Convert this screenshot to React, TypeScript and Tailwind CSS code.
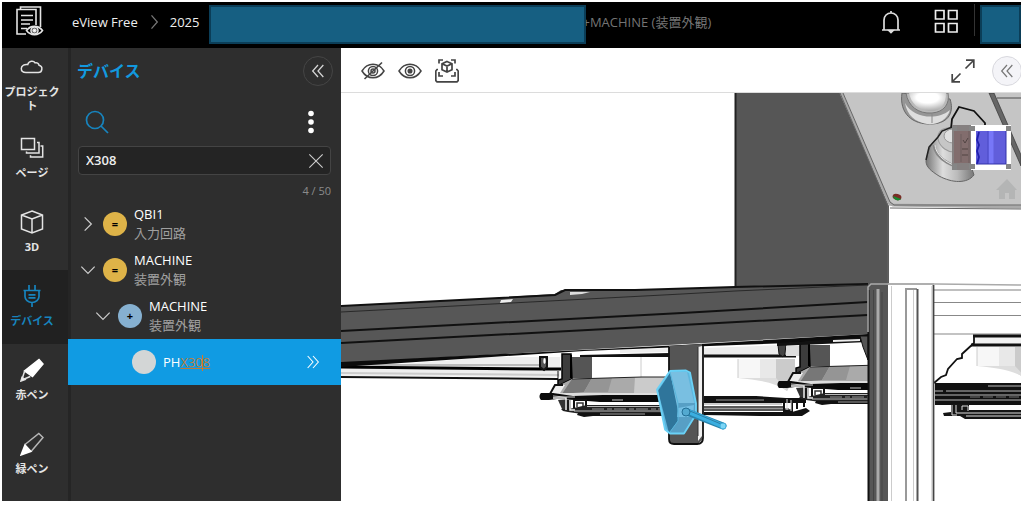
/**
 * Device search view
 * Header, navigation rail, device tree and the 3D machine viewer
 */

import { useState } from 'react';
import type { ReactNode } from 'react';
import { clsx } from 'clsx';

interface IconProps {
  children: ReactNode;
  className?: string;
  strokeWidth?: number;
}

function Icon({ children, className = 'size-6', strokeWidth = 1.5 }: IconProps) {
  return (
    <svg
      viewBox="0 0 24 24"
      fill="none"
      stroke="currentColor"
      strokeWidth={strokeWidth}
      className={clsx('shrink-0', className)}
      aria-hidden="true"
    >
      {children}
    </svg>
  );
}

const navItems = [
  {
    id: 'project',
    label: 'プロジェクト',
    icon: <path d="M6 17.5h12a3.7 3.7 0 0 0 1-7.3c-.3-2-2.200-2.900-3.900-2.300C13.800 5.700 9 5.400 7.700 9.600 5 9 1.300 10.300 1.300 13.500c0 2.400 2 4 4.700 4z" />,
  },
  {
    id: 'pages',
    label: 'ページ',
    icon: (
      <>
        <rect x="1.500" y="2.500" width="13" height="11" />
        <path d="M17 6.500h2v10.500H6.500v-1.500M20.500 10h2.200v11H10.500v-1.800" />
      </>
    ),
  },
  {
    id: '3d',
    label: '3D',
    icon: <path d="M12 1 22.500 5v14L12 23 1.500 19V5zM1.500 5 12 9l10.500-4M12 9v14" />,
  },
  {
    id: 'devices',
    label: 'デバイス',
    icon: (
      <path
        strokeWidth="1.700"
        d="M9 1v5M15 1v5M3.500 6.500h17M5 7v5.500c0 3 3 6 7 6s7-3 7-6V7M12 18.500V23M8.500 10.800h7M8.500 13.800h7"
      />
    ),
  },
  {
    id: 'red',
    label: '赤ペン',
    icon: (
      <>
        <path d="M19 1.500 23 6 12.500 18.500 4.500 13z" fill="#fff" stroke="#fff" />
        <path d="M4.500 13.500 1.800 22l8.500-3.500" />
        <path d="m1 23 1-3.500 3 2z" fill="#fff" />
      </>
    ),
  },
  {
    id: 'green',
    label: '緑ペン',
    icon: (
      <>
        <path d="M5 12.500 18.800 1.500 23 5.500 11.500 19" opacity=".75" />
        <path d="m5 13 6 6.500L1 23z" fill="#fff" stroke="#fff" />
      </>
    ),
  },
];

interface DeviceRow {
  id: number;
  title: string;
  subtitle: string;
  sign: string;
  open: boolean;
  nested: boolean;
}

const rows: DeviceRow[] = [
  { id: 1, title: 'QBI1', subtitle: '入力回路', sign: '=', open: false, nested: false },
  { id: 2, title: 'MACHINE', subtitle: '装置外観', sign: '=', open: true, nested: false },
  { id: 3, title: 'MACHINE', subtitle: '装置外観', sign: '+', open: true, nested: true },
];

function Header() {
  return (
    <header className="flex h-[46px] shrink-0 items-start bg-black text-[13px] text-[#eee]">
      <a href="#home" aria-label="Home" className="ml-3 mt-1">
        <svg viewBox="0 0 30 32" className="h-8 w-[30px]" fill="none" stroke="#e5e5e5" strokeWidth="1.600">
          <path d="M6.500 3.500V1h20v20M12 28H3V3.500h19V19M7 9.500h12M7 14h12M7 18h9M7 22.500h6" />
          <path d="M12.500 24.500c4-5.500 12-5.500 16 0-4 5.500-12 5.500-16 0z" />
          <circle cx="20.500" cy="24.500" r="3.500" />
          <circle cx="20.500" cy="24.500" r="1.500" fill="#fff" />
        </svg>
      </a>
      <nav aria-label="Breadcrumb" className="flex min-w-0 flex-1 items-start">
        <a href="#free" className="ml-7 mt-2.5 shrink-0 whitespace-nowrap leading-5">eView Free</a>
        <Icon className="mx-1.5 mt-2.5 size-5 text-[#777]">
          <path d="m9 4 7 8-7 8" />
        </Icon>
        <a href="#2025" className="mt-2.5 leading-5">2025</a>
        <div className="relative z-10 ml-2.5 mt-[3px] h-[39px] w-[377px] border-2 border-[#0b3e58] bg-[#165f82]" />
        <span className="-ml-1 mt-2.5 whitespace-nowrap leading-5 text-[#747474]">+MACHINE (装置外観)</span>
      </nav>
      <button aria-label="Notifications" className="mt-2 mr-[31px]">
        <Icon strokeWidth={1.700} className="size-6 text-[#ddd]">
          <path d="M3 20h18M5 19.500V10c0-4 3-7 7-7s7 3 7 7v9.500M12 1v2" />
          <path d="M10 20.500h4l-2 2z" fill="currentColor" />
        </Icon>
      </button>
      <button aria-label="Apps" className="mt-[7px] mr-4">
        <Icon strokeWidth={1.700}>
          <path d="M1.500 1.500H10V10H1.500zM14.500 1.500H23V10h-8.500zM1.500 14.500H10V23H1.500zM14.500 14.500H23V23h-8.500z" />
        </Icon>
      </button>
      <div className="mt-0.5 h-8 w-px bg-[#333]" />
      <div className="ml-[5px] mt-[3px] h-[39px] w-[41px] border-2 border-[#0b3e58] bg-[#165f82]" />
    </header>
  );
}

function NavRail() {
  return (
    <nav aria-label="Views" className="w-[66px] shrink-0 bg-[#2e2e2e]">
      {navItems.map((item) => (
        <button
          key={item.id}
          className={clsx(
            'flex h-[74px] w-full flex-col items-center justify-center gap-1.5 pb-0.5 pr-1.5 text-[11px] font-bold leading-[14px]',
            item.id === 'devices' ? 'bg-[#212121] text-[#1784be]' : 'text-[#e4e4e4]'
          )}
        >
          <Icon>{item.icon}</Icon>
          <span className="w-full break-all">{item.label}</span>
        </button>
      ))}
    </nav>
  );
}

function DevicePanel() {
  const [query, setQuery] = useState('X308');

  return (
    <aside className="w-[273px] shrink-0 border-l-[3px] border-[#252525] bg-[#2e2e2e]">
      <div className="flex h-[46px] items-center justify-between pl-1.5 pr-2">
        <h1 className="text-base font-bold text-[#1299df]">デバイス</h1>
        <button
          aria-label="Collapse panel"
          className="grid size-[30px] place-items-center rounded-full border border-[#454545] text-[#d5d5d5]"
        >
          <Icon className="size-4" strokeWidth={1.900}>
            <path d="m12 3-8 9 8 9M20 3l-8 9 8 9" />
          </Icon>
        </button>
      </div>
      <div className="mt-3.5 flex h-7 items-center justify-between pl-3.5 pr-4">
        <button aria-label="Search" className="text-[#1784be]">
          <Icon strokeWidth={1.700}>
            <circle cx="10" cy="10" r="8.500" />
            <path d="m16 16 7 7" />
          </Icon>
        </button>
        <button aria-label="More options" className="mr-0.5 text-white">
          <Icon className="size-6">
            <g fill="currentColor" stroke="none">
              <circle cx="12" cy="3.500" r="2.800" />
              <circle cx="12" cy="12" r="2.800" />
              <circle cx="12" cy="20.500" r="2.800" />
            </g>
          </Icon>
        </button>
      </div>
      <div className="ml-[7px] mr-2.5 mt-2.5 flex h-[29px] items-center rounded-sm border border-[#444] bg-[#242424]">
        <input
          aria-label="Search devices"
          value={query}
          onChange={(e) => setQuery(e.target.value)}
          className="min-w-0 flex-1 bg-transparent px-[7px] text-[13px] font-semibold text-[#eee] outline-none"
        />
        <button aria-label="Clear search" onClick={() => setQuery('')} className="mr-1.5 text-[#ccc]">
          <Icon className="size-4" strokeWidth={1.700}>
            <path d="m2 2 20 20M22 2 2 22" />
          </Icon>
        </button>
      </div>
      <p className="mt-2 mr-2.5 mb-0.5 text-right text-[11px] leading-4 text-[#8b8b8b]">4 / 50</p>

      <ul>
        {rows.map((row) => (
          <li key={row.id}>
            <button
              aria-expanded={row.open}
              className={clsx('flex h-[46px] w-full items-center text-left', row.nested ? 'pl-6' : 'pl-[9px]')}
            >
              <Icon className="size-4 text-[#ccc]" strokeWidth={1.900}>
                {row.open ? <path d="m2 7 10 10L22 7" /> : <path d="m7 2 10 10L7 22" />}
              </Icon>
              <span
                className={clsx(
                  'ml-[7px] grid size-6 shrink-0 place-items-center rounded-full text-[11px] font-bold leading-4 text-black',
                  row.nested ? 'bg-[#86b0d0]' : 'bg-[#deb348]'
                )}
              >
                {row.sign}
              </span>
              <span className="ml-[7px] flex flex-col text-[13px] leading-[19px]">
                <span className="font-medium text-white">{row.title}</span>
                <span className="text-[#a0a0a0]">{row.subtitle}</span>
              </span>
            </button>
          </li>
        ))}
        <li className="-ml-[3px] bg-[#109be3]">
          <button className="flex h-[46px] w-full items-center pl-16 text-[13px] leading-[19px] text-white">
            <span className="size-6 rounded-full bg-[#d3d6d6]" />
            <span className="relative ml-[7px] font-medium">
              PH<span className="text-[#b87f41] underline decoration-[#c07a34]">X308</span>
              <span className="absolute right-[7px] top-0.5 h-4 w-px bg-[#e2761b]" />
            </span>
            <Icon className="ml-auto mr-5 size-4" strokeWidth={1.600}>
              <path d="m4 3 8 9-8 9M12 3l8 9-8 9" />
            </Icon>
          </button>
        </li>
      </ul>
    </aside>
  );
}

function Toolbar() {
  const eye = (
    <>
      <path d="M1 12c5.500-9 16.500-9 22 0-5.500 9-16.500 9-22 0z" />
      <circle cx="12" cy="12" r="4.600" />
    </>
  );

  return (
    <div className="relative flex h-[45px] shrink-0 items-center gap-[13px] border-b border-[#dcdcdc] bg-white pl-5 pt-px text-[#444]">
      <button aria-label="Hide">
        <Icon>
          {eye}
          <circle cx="12" cy="12" r="2" />
          <path d="M3.500 20 21 3.500" strokeWidth="1.600" />
        </Icon>
      </button>
      <button aria-label="Show">
        <Icon>
          {eye}
          <circle cx="12" cy="12" r="1.800" fill="currentColor" />
        </Icon>
      </button>
      <button aria-label="Fit selection">
        <Icon strokeWidth={1.700}>
          <path d="M4 4.500V1h4M16 1h4v3.500M4 13v4h4M16 17h4v-4" />
          <path d="m12 2.500 5 2.200v6L12 13l-5-2.300v-6zM7 4.700l5 2.300 5-2.300M12 7v6" />
          <path d="M3 10.500H2L.8 12v9.500l1.200 1.300h20l1.200-1.300V12L22 10.500h-1" />
        </Icon>
      </button>
      <button aria-label="Full screen" className="ml-auto mr-1">
        <Icon strokeWidth={1.700}>
          <path d="m14.500 9.500 8-8M15 1.200h7.800V9M9.500 14.500l-8 8M1.200 15v7.800H9" />
        </Icon>
      </button>
      <button
        aria-label="Open side panel"
        className="-mr-px grid size-[30px] place-items-center rounded-full border border-[#d8d8de] bg-[#f4f4f8] text-[#777]"
      >
        <Icon className="size-4" strokeWidth={1.800}>
          <path d="m12 3-8 9 8 9M20 3l-8 9 8 9" />
        </Icon>
      </button>
    </div>
  );
}

/** Round tray with its support arm, repeated along the machine */
function Tray({ x = 0, y = 0 }: { x?: number; y?: number }) {
  return (
    <g transform={`translate(${x} ${y})`}>
      <path d="M572 357h20v21h-20z" fill="#555" />
      <path d="M562 354h9l1 25-14 7v-6l4-1z" fill="#3c3c3c" stroke="#000" strokeWidth="1.500" />
      <path d="M571 355v23" stroke="#000" strokeWidth="2" />
      <path d="m572 379 70-2h34v18H555l3-9z" fill="#aaa" />
      <path d="m572 379 20-1-8 14-22 2z" fill="#777" />
      <path d="M592 378h20l-4 14h-24z" fill="#959595" />
      <path d="m635 377 7 0h34v16h-42z" fill="#cbcbcb" />
      <path d="M572 379l70-2h34" stroke="#222" />
      <path d="M555 393h112v3H553z" fill="#ddd" />
      <path d="m555 384 10 1-5 8-10 2z" fill="#eee" />
      <path d="M543 396l7-2 5-9h8" stroke="#111" strokeWidth="2" />
      <path d="M541 393h12l20 3 30-1h135v7H600l-25-2-18-1-8 1h-8c-2-2-2-5 0-7z" fill="#0a0a0a" />
      <path d="M612 400h11M553 396l12 1h10" stroke="#ccc" />
      <path d="M558 400h13v9h-9z" fill="#333" />
      <path d="M574 408v-8h12v8" stroke="#111" strokeWidth="2" />
      <path d="M577 407v-4h6v4" stroke="#333" strokeWidth="1.500" />
      <path d="M561 409h8l18-4h151v9H582l-14-2-5-1z" fill="#222" />
      <path d="M553 398h13v12M570 400v10h5" stroke="#eee" strokeWidth="1.500" />
      <path d="M568 400v10" stroke="#111" strokeWidth="1.500" />
      <path d="M587 406.500h150M574 411h164" stroke="#bbb" />
      <path d="M592 409h145" stroke="#999" strokeDasharray="12 3 5 2" />
      <path d="M578 413h160l-3 3H593l-9 1-7-2z" fill="#111" />
      <path d="M600 414h45" stroke="#ddd" strokeWidth=".7" />
    </g>
  );
}

function ConeFade({ x, y }: { x: number; y: number }) {
  return (
    <g transform={`translate(${x} ${y})`}>
      <path d="M0 0h22v20L0 19z" fill="#f7f7f7" />
      <path d="M22 0h16v25l-16-5z" fill="#e8e8e8" />
      <path d="M38 0h19v18l-8 14-11-7z" fill="#cbcbcb" />
      <path d="M0 19h38l12 13c-14-9-30-11-50-13z" fill="#ddd" />
      <path d="M0 0v19" stroke="#ccc" />
    </g>
  );
}

function PushLamp() {
  return (
    <g>
      <path d="M902 93c-3 20 10 32 30 31 18-1 22-13 18-25z" fill="#969696" stroke="#666" />
      <path d="M905 103c8 15 32 18 45 7-3 10-12 15-23 14-12-2-20-9-22-21z" fill="#dedede" />
      <path d="M906 93c2 13 12 21 26 20 12-1 18-9 16-20z" fill="#b9b9b9" stroke="#777" />
      <path d="M909 93c2 10 9 17 20 18 12 1 17-7 17-18z" fill="url(#lamp)" />
      <path d="M932 114v9" stroke="#888" />
      <path d="m951 129 1-10 7-12 15 4 11 12v6" stroke="#111" strokeWidth="1.800" />
    </g>
  );
}

function SelectorSwitch() {
  return (
    <g>
      <path d="M926 161c2-9 4-18 11-22l10-9 12-1 15 46c-7 9-22 8-35 1-8-5-13-9-13-15z" fill="url(#steel)" stroke="#666" />
      <path d="M934 145c1 13 21 27 40 20" fill="none" stroke="#888" strokeWidth="3" />
      <path d="M935 145c1 13 21 27 40 20" stroke="#eee" />
      <ellipse cx="951" cy="140" rx="14" ry="11" transform="rotate(35 951 140)" fill="#c6c6c6" stroke="#999" />
      <ellipse cx="953" cy="136" rx="9" ry="7" fill="#e0e0e0" stroke="#999" />
      <path d="m926 160 3-13 9-10 4-6 10-4" stroke="#222" strokeWidth="1.500" />
      <path d="M952 125h19v45h-19z" fill="#858080" />
      <path d="M954 131h16v32h-16z" fill="#826d6d" />
      <path d="M961 134v28M969 131v32" stroke="#6d5e5e" />
      <path d="M963 140l2 3 3-5M962 149h6M962 155h6" stroke="#514443" />
      <path d="M971 125h40v45h-40z" fill="#fff" />
      <path d="M976 131h30v33h-30z" fill="#615edb" />
      <path d="M991 131v33" stroke="#7777f8" strokeWidth="5" />
      <path d="M988 131v33" stroke="#4b48c4" />
      <path d="m979 132-2 8 2 5-2 6 2 6-2 7" stroke="#2020ad" strokeWidth="1.800" />
      <path d="M976 164h30v-33" stroke="#3333a8" />
      <path d="M952 126h5v5h-5zM969 126h6v5h-6zM1006 126h5v5h-5zM952 164h5v6h-5zM969 164h6v5h-6zM1006 164h5v5h-5z" fill="#858585" />
    </g>
  );
}

function MachineScene() {
  return (
    <svg
      viewBox="341 93 680 408"
      preserveAspectRatio="xMidYMid slice"
      className="absolute inset-0 size-full"
      fill="none"
      role="img"
      aria-label="3D machine model"
    >
      <defs>
        <radialGradient id="lamp" cx=".5" cy=".25" r=".75">
          <stop offset=".4" stopColor="#fff" />
          <stop offset="1" stopColor="#aaa" />
        </radialGradient>
        <linearGradient id="steel">
          <stop stopColor="#777" />
          <stop offset=".35" stopColor="#ddd" />
          <stop offset=".65" stopColor="#bbb" />
          <stop offset="1" stopColor="#777" />
        </linearGradient>
        <clipPath id="middle">
          <path d="M740 330h128v100H740z" />
        </clipPath>
        <clipPath id="near">
          <path d="M530 345h140v80H530z" />
        </clipPath>
      </defs>

      {/* Control cabinet */}
      <path d="M735 93h106l48 113v90H735z" fill="#565656" />
      <path d="M735.500 93v195" stroke="#222" strokeWidth="2" />
      <path d="M841 93h180v115l-132-2z" fill="#c5c5c5" />
      <path d="m841 93 48 110 4 2 128 2" stroke="#aaa" strokeWidth="3" />
      <path d="m840 93 48 113v84M843 93l47 109 4 3h127M890 208l131 1" stroke="#666" />
      <path d="m989 93 5 0 27 62v11z" fill="#666" stroke="#333" strokeWidth=".7" />
      <path d="M997 98h24" stroke="#888" strokeWidth="2" />
      <PushLamp />
      <SelectorSwitch />
      <ellipse cx="897" cy="197" rx="4.500" ry="3" transform="rotate(15 897 197)" fill="#7a2c25" />
      <path d="m893 196 8 3c-3 3-7 1-8-3z" fill="#168a30" />
      <path d="m996 190 11-11 10 11h-2v9h-6v-6h-4v6h-6v-9z" fill="#b4b5b5" />

      {/* Rails under the beam */}
      <path d="M341 369 490 357h70v20l-219-1z" fill="#eee" />
      <path d="m341 367 200 2h20" stroke="#000" strokeWidth="3" />
      <path d="M350 365h190" stroke="#bbb" strokeWidth="2" />
      <path d="m341 373 218 2" stroke="#ccc" strokeWidth="2" />
      <path d="m341 377 217 2" stroke="#111" strokeWidth="2" />
      <path d="M558 371v8" stroke="#111" />
      <path d="M540 357h7v10l-3 3-4-3z" fill="#555" stroke="#111" strokeWidth="2" />
      <ellipse cx="544.500" cy="361" rx="1.200" ry="3" fill="#fff" />
      <path d="M641 357v20" stroke="#ccc" />
      <g clipPath="url(#near)">
        <Tray />
      </g>
      <path d="m580 355 90-2v4h-90z" fill="#111" />
      <path d="m620 350 50-2v4l-50 1z" fill="#eee" />

      {/* Main beam */}
      <path d="m341 306 158-8 6-1 50-3 6-4h80l94-3 133-3v50L341 363z" fill="#575757" />
      <path d="m341 306 158-8 56-3 10-5h70l100-3 133-3" stroke="#111" strokeWidth="2" />
      <path d="m341 312 341-18 53-3 133-6" stroke="#292929" />
      <path d="m341 331 341-18 186-11M341 343l341-18 186-10" stroke="#111" strokeWidth="2" />
      <path d="m341 362 341-17 186-11v6l-186 7-98 4-243 16z" fill="#0b0b0b" />
      <path d="m501 300 12-1-2 3-11 1z" fill="#eee" />
      <path d="m570 292 20 0-8 2-12 1z" fill="#ddd" />

      {/* Right part of the lower deck */}
      <path d="m704 348 76-3v10h-76z" fill="#ececec" />
      <path d="M704 356h92" stroke="#111" strokeWidth="3" />
      <ConeFade x={738} y={359} />
      <path d="m778 345 8-1-1 10-2 3-4-3z" fill="#444" stroke="#111" />
      <path d="M786 346h14v10h-14z" fill="#ddd" />
      <path d="M704 396h92l8 4 4 8-9 8H704z" fill="#fff" />
      <path d="M704 396h52l30 2h20v5H704z" fill="#111" />
      <path d="M716 400h48" stroke="#999" />
      <path d="M704 407h80M704 410h88" stroke="#222" strokeWidth="1.500" />
      <path d="M704 408.500h85M704 404h78" stroke="#999" />
      <path d="M704 412h88l14-4 4 3-8 5H760l-56-1z" fill="#111" />
      <path d="M784 399v12h8v-12M797 409v-7h7v5" stroke="#111" strokeWidth="2" />
      <path d="M787 399v11M791 400v11" stroke="#ddd" />
      <g clipPath="url(#middle)">
        <Tray x={238} y={-12} />
      </g>
      <path d="m777 343 91-6v5l-91 4z" fill="#111" />
      <path d="m833 340 27-1v2l-27 1z" fill="#eee" />
      <path d="M860 336h8v24l-5-13z" fill="#555" stroke="#111" />

      {/* Sensor bracket */}
      <path d="m669 346 33-2v96l-5 5h-22l-6-4z" fill="#555" />
      <path d="m698 347 4-1v90l-4 5z" fill="#f1f1f1" />
      <path d="M669 347v92c0 3 2 5 5 5h23c4 0 6-2 6-6v-92" stroke="#111" strokeWidth="1.800" />
      <path d="M698 347v89" stroke="#333" />

      {/* Highlighted sensor */}
      <path d="m670 371 16-.5 4 2 6 31v11l-12 19h-14l-5-4-7-35-1-5z" fill="#5eb6dd" />
      <path d="m658 391 12-18 8 30v18l-9 12z" fill="#2f759b" />
      <path d="m670 372 17 0 8 34-17 5z" fill="#79bfe1" />
      <path d="m678 403 0 18-9 12h15l11-18v-12z" fill="#579fc5" />
      <path d="m678 408 16-3-1 12-16 0z" fill="#73bee3" />
      <path d="M670 372l8 31v18l-8 11" stroke="#58b4da" />
      <path d="m670 371 16-.5 4 2 6 31v11l-12 19h-14l-5-4-7-35-1-5z" stroke="#6ad1f6" strokeWidth="1.800" strokeLinejoin="round" />
      <path d="m687 412 36 14" stroke="#2a84ac" strokeWidth="7" strokeLinecap="round" />
      <path d="m687 411 36 15" stroke="#3aaee0" strokeWidth="5" strokeLinecap="round" />
      <path d="m690 411 31 13" stroke="#2d7da4" />
      <circle cx="686" cy="412" r="4" fill="#53a9d0" stroke="#246f96" />
      <circle cx="723" cy="426" r="3" fill="#7dd5f5" stroke="#41afdc" />

      {/* Far right deck */}
      <path d="M934 286h87v48h-87z" fill="#fff" />
      <path d="M888 284h48l85 1M934 290h87" stroke="#aaa" strokeWidth="1.500" />
      <path d="M934 302.500h87M934 315.500h87M934 334h87" stroke="#888" strokeWidth="1.200" />
      <path d="M975 336h46v10h-46z" fill="#f2f2f2" />
      <path d="M973 336h48M971 345h50" stroke="#111" strokeWidth="3" />
      <path d="M974 336v7l-12 11v4l-5 1-9 10-2 6-5 2-7 6" stroke="#111" strokeWidth="1.800" />
      <ConeFade x={977} y={347} />
      <path d="M935 383h86v22h-86z" fill="#111" />
      <path d="M988 386h33M935 391h8M946 391h75M935 395h86M935 400h86" stroke="#bbb" />
      <path d="M970 397h51" stroke="#777" strokeDasharray="10 3" />
      <path d="m943 413 8-1v-8h18v6h52v9h-56l-5-3h-16z" fill="#151515" />
      <path d="M952 405v10h5M956 405v8h65M962 410v-4h6v5M966 416h55" stroke="#ddd" />

      {/* Upright post */}
      <path d="M868 286c0-2 2-3 4-3h16v218h-20z" fill="#565656" />
      <path d="M888 285h46v216h-46z" fill="#fff" />
      <path d="M868.500 290v211" stroke="#111" strokeWidth="2" />
      <path d="M868 332v-45l3-3h63" stroke="#aaa" strokeWidth="1.500" />
      <path d="M873.500 290v211" stroke="#444" />
      <path d="M878 289v212" stroke="#aaa" strokeWidth="3" />
      <path d="M882 292v209" stroke="#444" />
      <path d="M891.500 286v215M913.500 290v211" stroke="#ccc" />
      <path d="M906 501V289h11" stroke="#999" strokeWidth="2" />
      <path d="M917.500 289v212" stroke="#555" strokeWidth="2" />
      <path d="M933.500 285v216" stroke="#444" strokeWidth="1.800" />
      <path d="M932 286v215" stroke="#bbb" />
    </svg>
  );
}

export default function App() {
  return (
    <div className="flex min-h-screen flex-col bg-white pb-[7px] pl-0.5 pr-[3px] pt-0.5 font-['Open_Sans','Noto_Sans_CJK_JP',sans-serif]">
      <Header />
      <div className="flex flex-1">
        <NavRail />
        <DevicePanel />
        <main className="flex min-w-0 flex-1 flex-col overflow-hidden">
          <Toolbar />
          <div className="relative flex-1 overflow-hidden">
            <MachineScene />
          </div>
        </main>
      </div>
    </div>
  );
}
